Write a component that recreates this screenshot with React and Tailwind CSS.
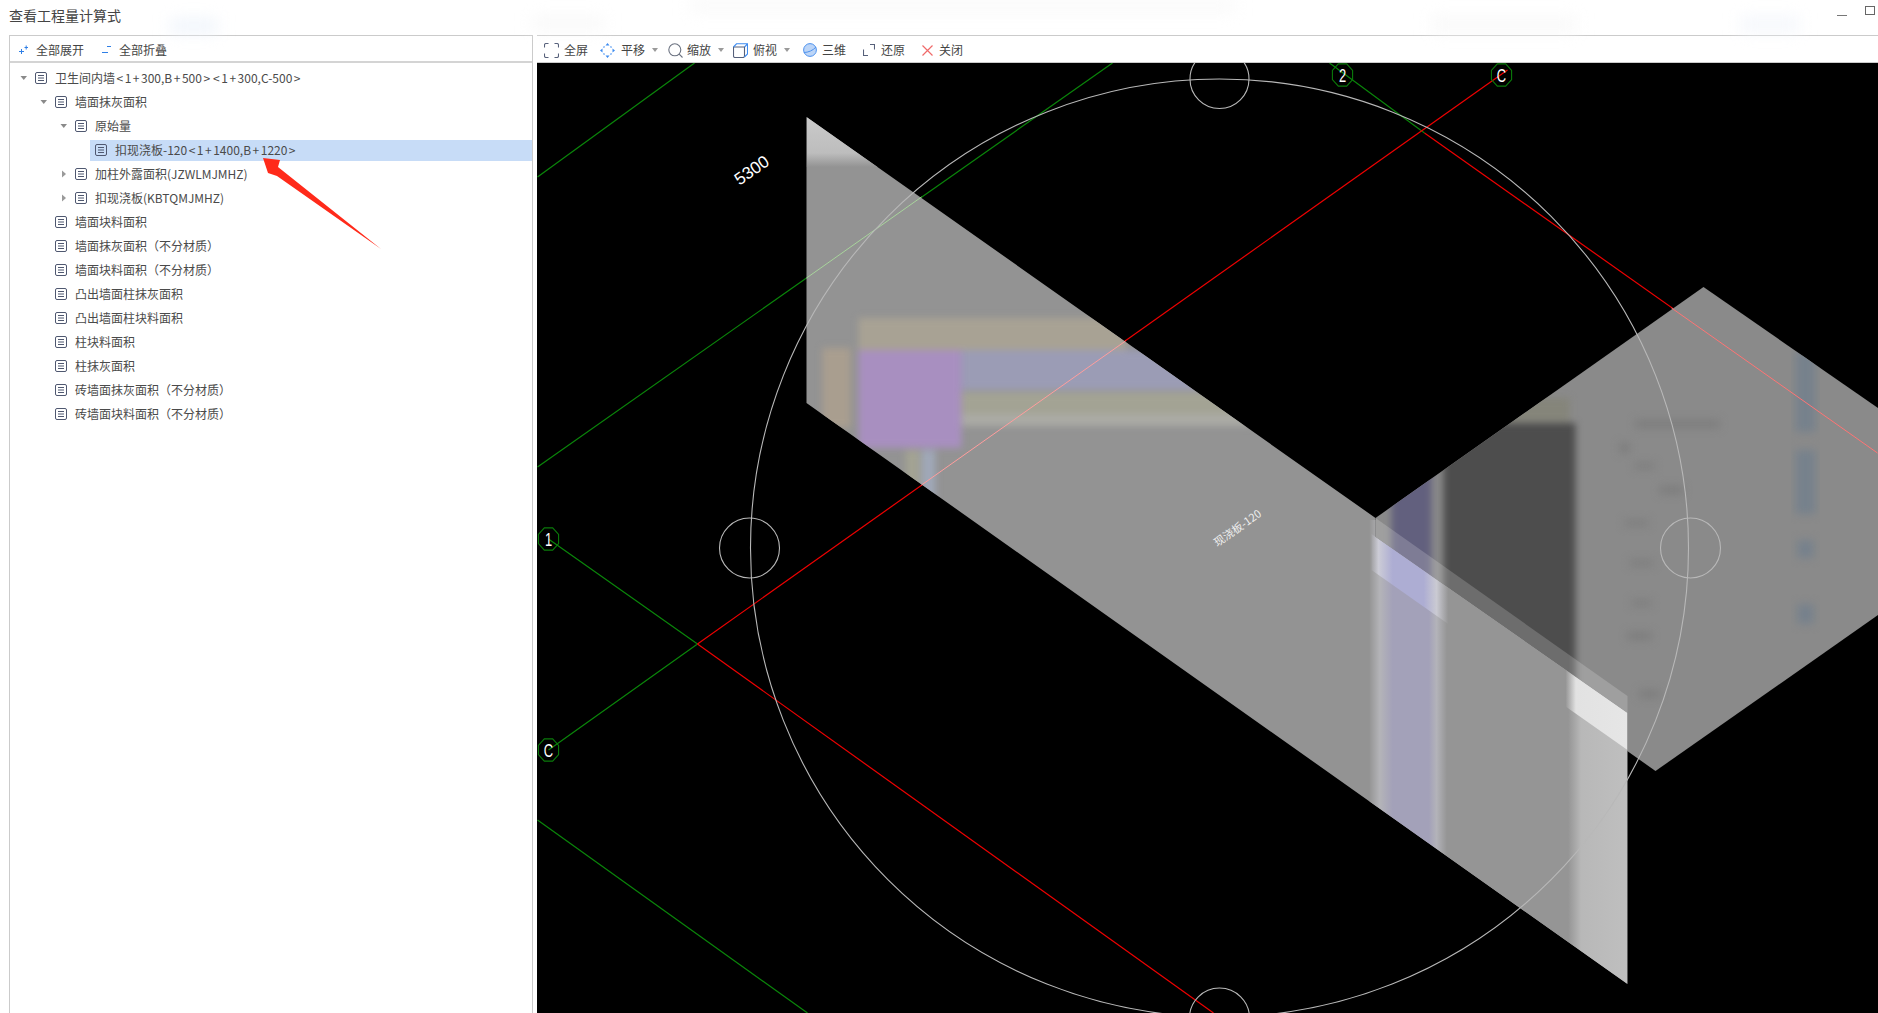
import React from "react";

const DocIcon = () => (
  <svg width="12" height="12" viewBox="0 0 12 12" className="shrink-0">
    <rect x="0.5" y="0.5" width="11" height="11" rx="1.5" fill="none" stroke="#4f5870" />
    <path d="M3 3.5H9M3 6H9M3 8.5H9" stroke="#4f5870" strokeWidth="1" />
  </svg>
);

const Caret = ({ open }) => (
  <svg width="8" height="8" viewBox="0 0 8 8" className="shrink-0">
    {open ? <path d="M0.5 2L7 2L3.75 6Z" fill="#8a8a8a" /> : <path d="M2 0.5L6 4L2 7.5Z" fill="#9a9a9a" />}
  </svg>
);

const rows = [
  { level: 0, caret: "open", text: "卫生间内墙<1+300,B+500><1+300,C-500>" },
  { level: 1, caret: "open", text: "墙面抹灰面积" },
  { level: 2, caret: "open", text: "原始量" },
  { level: 3, text: "扣现浇板-120<1+1400,B+1220>", selected: true },
  { level: 2, caret: "closed", text: "加柱外露面积(JZWLMJMHZ)" },
  { level: 2, caret: "closed", text: "扣现浇板(KBTQMJMHZ)" },
  { level: 1, text: "墙面块料面积" },
  { level: 1, text: "墙面抹灰面积（不分材质）" },
  { level: 1, text: "墙面块料面积（不分材质）" },
  { level: 1, text: "凸出墙面柱抹灰面积" },
  { level: 1, text: "凸出墙面柱块料面积" },
  { level: 1, text: "柱块料面积" },
  { level: 1, text: "柱抹灰面积" },
  { level: 1, text: "砖墙面抹灰面积（不分材质）" },
  { level: 1, text: "砖墙面块料面积（不分材质）" },
];

const indent = ["ml-[20px]", "ml-[40px]", "ml-[60px]", "ml-[80px]"];

function Label({ text }) {
  const parts = text.split(/([<>+])/);
  return (
    <span className="whitespace-nowrap text-xs text-[#4a4a4a]">
      {parts.map((p, i) =>
        /^[<>+]$/.test(p) ? <span key={i} className="mx-[1.5px]">{p}</span> : <span key={i}>{p}</span>
      )}
    </span>
  );
}

function Row({ level, caret, text, selected }) {
  return (
    <div className="h-6 flex items-center">
      <div className={`${indent[level]} h-[21px] flex items-center flex-1 ${selected ? "bg-[#c7dcf7]" : ""}`}>
        <div className="w-[10px] shrink-0 -ml-[10px] flex items-center">
          {caret ? <Caret open={caret === "open"} /> : null}
        </div>
        <div className="ml-[5px] mr-2">
          <DocIcon />
        </div>
        <Label text={text} />
      </div>
    </div>
  );
}

const Caret2 = () => (
  <svg width="6" height="4" viewBox="0 0 6 4" className="shrink-0 ml-[7px]">
    <path d="M0 0H6L3 4Z" fill="#9a9a9a" />
  </svg>
);

const ic = { fill: "none", strokeWidth: 1.1 };

function FullIcon() {
  return (
    <svg width="15" height="15" viewBox="0 0 15 15" {...ic} stroke="#56607a">
      <path d="M.5 4.5V2A1.5 1.5 0 0 1 2 .5H4.5M10.5 .5H13A1.5 1.5 0 0 1 14.5 2V4.5M14.5 10.5V13A1.5 1.5 0 0 1 13 14.5H10.5M4.5 14.5H2A1.5 1.5 0 0 1 .5 13V10.5" />
    </svg>
  );
}
function PanIcon() {
  return (
    <svg width="15" height="15" viewBox="0 0 15 15" {...ic} stroke="#3d8bf0">
      <path d="M7.5 0L9.5 2.5H5.5ZM7.5 15L5.5 12.5H9.5ZM0 7.5L2.5 5.5V9.5ZM15 7.5L12.5 9.5V5.5Z" fill="#3d8bf0" stroke="none" />
      <path d="M3.5 4.5L4.5 3.5M10.5 3.5L11.5 4.5M3.5 10.5L4.5 11.5M10.5 11.5L11.5 10.5" />
    </svg>
  );
}
function ZoomIcon() {
  return (
    <svg width="15" height="15" viewBox="0 0 15 15" {...ic} stroke="#6b7280">
      <circle cx="6.8" cy="6.8" r="6" />
      <path d="M11.2 11.2L14.5 14.5" />
    </svg>
  );
}
function BoxIcon() {
  return (
    <svg width="15" height="15" viewBox="0 0 15 15" {...ic} stroke="#56607a">
      <path d="M.5 4V13A1.5 1.5 0 0 0 2 14.5H10A1.5 1.5 0 0 0 11.5 13V4Z" />
      <path d="M.5 4L3.5 .8H14.5V11L11.5 14M11.5 4L14.5 .8" stroke="#3d8bf0" />
    </svg>
  );
}
function SphereIcon() {
  return (
    <svg width="14" height="14" viewBox="0 0 14 14">
      <circle cx="7" cy="7" r="6.4" fill="#bcd5f7" stroke="#4e92ee" strokeWidth="1" />
      <path d="M1 9.5C5 9.5 10 7.5 13 4" fill="none" stroke="#4e92ee" strokeWidth="1" />
    </svg>
  );
}
function RestoreIcon() {
  return (
    <svg width="12" height="12" viewBox="0 0 12 12" {...ic} stroke="#56607a">
      <path d="M.5 5.5V11.5H5M7 .5H11.5V5.5" />
    </svg>
  );
}
function CloseIcon() {
  return (
    <svg width="11" height="11" viewBox="0 0 11 11" {...ic} stroke="#f06a6a" strokeWidth="1.2">
      <path d="M.5 .5L10.5 10.5M10.5 .5L.5 10.5" />
    </svg>
  );
}

function Tool({ ml, gap, icon, text, caret }) {
  return (
    <div className={`flex items-center ${ml}`}>
      {icon}
      <span className={`${gap} text-xs text-[#444] whitespace-nowrap`}>{text}</span>
      {caret ? <Caret2 /> : null}
    </div>
  );
}

const wallPts = "807,117 1376,518 1376,537 1628,713 1628,984 807,403";
const slabPts = "1376,518 1704,287 1900,423 1900,600 1656,771 1376,573";

function Bubble({ x, y, t }) {
  const r = 11.5;
  const pts = [];
  for (let i = 0; i < 8; i++) {
    const a = (Math.PI / 8) * (2 * i + 1);
    pts.push(`${x + r * 0.95 * Math.cos(a)},${y + r * 1.05 * Math.sin(a)}`);
  }
  return (
    <g>
      <polygon points={pts.join(" ")} fill="none" stroke="#0a7a0a" strokeWidth="1.1" />
      <text
        textAnchor="middle"
        fontSize="18"
        fill="#fff"
        fontFamily="Liberation Sans, sans-serif"
        transform={`translate(${x} ${y + 6.5}) scale(0.72 1)`}
      >
        {t}
      </text>
    </g>
  );
}

function Scene() {
  return (
    <svg viewBox="538 63 1340 950" className="block w-full h-full bg-black">
      <defs>
        <clipPath id="wall"><polygon points={wallPts} /></clipPath>
        <clipPath id="slab"><polygon points={slabPts} /></clipPath>
        <filter id="b3" x="-20%" y="-20%" width="140%" height="140%" colorInterpolationFilters="sRGB"><feGaussianBlur stdDeviation="3.5" /></filter>
        <filter id="b1" x="-20%" y="-20%" width="140%" height="140%" colorInterpolationFilters="sRGB"><feGaussianBlur stdDeviation="4" /></filter>
        <linearGradient id="topg" x1="0" y1="0" x2="0" y2="1">
          <stop offset="0" stopColor="#cacaca" />
          <stop offset="0.72" stopColor="#bdbdbd" />
          <stop offset="1" stopColor="#939393" />
        </linearGradient>
        <linearGradient id="lower" gradientUnits="userSpaceOnUse" x1="1370" y1="0" x2="1628" y2="0">
          <stop offset="0" stopColor="#959595" />
          <stop offset="0.04" stopColor="#b4b4b8" />
          <stop offset="0.09" stopColor="#a3a1b9" />
          <stop offset="0.23" stopColor="#a3a1b9" />
          <stop offset="0.26" stopColor="#b3b3b9" />
          <stop offset="0.3" stopColor="#959595" />
          <stop offset="0.77" stopColor="#959595" />
          <stop offset="0.82" stopColor="#b8b8b8" />
          <stop offset="1" stopColor="#bfbfbf" />
        </linearGradient>
        <linearGradient id="strip" gradientUnits="userSpaceOnUse" x1="1370" y1="0" x2="1628" y2="0">
          <stop offset="0" stopColor="#959595" />
          <stop offset="0.035" stopColor="#ccccd6" />
          <stop offset="0.09" stopColor="#adadd3" />
          <stop offset="0.21" stopColor="#adadd3" />
          <stop offset="0.26" stopColor="#cacad2" />
          <stop offset="0.305" stopColor="#959595" />
          <stop offset="0.76" stopColor="#959595" />
          <stop offset="0.8" stopColor="#e2e2e2" />
          <stop offset="1" stopColor="#e6e6e6" />
        </linearGradient>
      </defs>

      {/* grid lines */}
      <g fill="none" strokeWidth="1.2">
        <path d="M538 177L695 63" stroke="#0a860a" />
        <path d="M538 467L1113 63" stroke="#0a860a" />
        <path d="M538 820L808 1013" stroke="#0a860a" />
        <path d="M549 539L698 644M549 750L698 644" stroke="#0a860a" />
        <path d="M1330 63L1425 133" stroke="#0a860a" />
        <path d="M698 644L1508 70" stroke="#ee0000" />
        <path d="M698 644L1214 1013" stroke="#ee0000" />
        <path d="M1425 133L1878 453" stroke="#ee0000" />
      </g>

      {/* slab */}
      <polygon points={slabPts} fill="#8a8a8a" />
      <g clipPath="url(#slab)">
        <g filter="url(#b3)">
          <rect x="1500" y="398" width="70" height="24" fill="#85857a" />
          <rect x="1392" y="380" width="40" height="260" fill="#62607e" />
          <rect x="1444" y="423" width="132" height="300" fill="#4d4d4d" />
        </g>
        <g filter="url(#b1)" fill="#76818c">
          <rect x="1796" y="352" width="20" height="80" />
          <rect x="1796" y="450" width="20" height="64" />
          <rect x="1798" y="540" width="16" height="18" />
          <rect x="1798" y="604" width="16" height="20" />
        </g>
        <g filter="url(#b1)" fill="#7d7d7d">
          <rect x="1636" y="420" width="84" height="8" />
          <rect x="1620" y="443" width="10" height="10" />
          <rect x="1635" y="463" width="20" height="6" />
          <rect x="1660" y="486" width="24" height="8" />
          <rect x="1625" y="520" width="24" height="6" />
          <rect x="1630" y="560" width="24" height="6" />
          <rect x="1632" y="600" width="20" height="6" />
          <rect x="1628" y="632" width="24" height="8" />
          <rect x="1640" y="690" width="20" height="8" />
        </g>
      </g>
      <polygon points="1376,518 1376,537 1628,713 1628,696" fill="#fff" fillOpacity="0.18" />

      {/* wall */}
      <polygon points={wallPts} fill="#939393" />
      <g clipPath="url(#wall)">
        <rect x="807" y="117" width="200" height="50" fill="url(#topg)" />
        <g filter="url(#b3)">
          <rect x="859" y="318" width="268" height="32" fill="#a8a294" />
          <rect x="962" y="350" width="240" height="40" fill="#9b9cb5" />
          <rect x="962" y="392" width="290" height="22" fill="#a3a394" />
          <rect x="962" y="414" width="290" height="12" fill="#ababa5" />
          <rect x="823" y="348" width="28" height="80" fill="#a99e8f" />
          <rect x="859" y="350" width="103" height="98" fill="#a88fc0" />
          <rect x="906" y="450" width="14" height="50" fill="#a3a393" />
          <rect x="922" y="450" width="14" height="50" fill="#a0a8b8" />
        </g>
        <rect x="1370" y="520" width="258" height="470" fill="url(#lower)" />
        <polygon points="1372,534 1628,713 1628,750 1372,570" fill="url(#strip)" />
      </g>

      {/* lines seen through the wall and slab */}
      <path d="M807 278L922 197" stroke="#a8d49c" strokeWidth="1" />
      <path d="M922 485L1126 341" stroke="#ff9d9d" strokeWidth="1" />
      <path d="M1672 308L1878 453" stroke="#ff7474" strokeWidth="1" />

      {/* circles */}
      <g fill="none" stroke="#b8b8b8" strokeWidth="1.1">
        <circle cx="1220" cy="548" r="469" />
        <circle cx="1220" cy="79" r="29.5" />
        <circle cx="750" cy="548" r="30" />
        <circle cx="1691" cy="548" r="30" />
        <circle cx="1220" cy="1018" r="30" />
      </g>

      <Bubble x={1343} y={75} t="2" />
      <Bubble x={1502} y={75} t="C" />
      <Bubble x={549} y={539} t="1" />
      <Bubble x={549} y={750} t="C" />

      <text x="752" y="176" fontSize="17" fill="#fff" textAnchor="middle" transform="rotate(-35 752 170)" fontFamily="Liberation Sans, sans-serif">5300</text>
      <text x="1238" y="532" fontSize="11" fill="#f0f0f0" textAnchor="middle" transform="rotate(-35 1238 528)" fontFamily="Noto Sans CJK SC, sans-serif">现浇板-120</text>
    </svg>
  );
}

export default function App() {
  return (
    <div className="relative w-[1878px] h-[1013px] overflow-hidden bg-white flex flex-col [font-family:'Noto_Sans_CJK_SC','Liberation_Sans',sans-serif]">
      <div className="h-[35px] shrink-0 flex items-center justify-between pl-[9px] pr-[3px]">
        <span className="text-sm text-[#444] -mt-[5px]">查看工程量计算式</span>
        <div className="flex items-center gap-[18px] -mt-[14px]">
          <div className="w-[10px] h-px bg-[#777] mt-[9px]" />
          <div className="w-[10px] h-[9px] border border-[#666]" />
        </div>
      </div>
      <div className="flex-1 min-h-0 flex pl-[9px]">
        <div className="w-[524px] shrink-0 border-l border-r border-t border-[#cbcbcb] flex flex-col">
          <div className="h-[27px] shrink-0 border-b-2 border-[#d4d4d4] flex items-center pt-[2px]">
            <svg width="9" height="9" viewBox="0 0 9 9" className="ml-[9px]" stroke="#2f7fe6" fill="none">
              <path d="M0 6.5H5M2.5 4V9M5.5 2.5H9M7.2 0.5V4.5" />
            </svg>
            <span className="ml-[8px] text-xs text-[#444]">全部展开</span>
            <svg width="9" height="9" viewBox="0 0 9 9" className="ml-[18px]" stroke="#2f7fe6" fill="none">
              <path d="M0 7.5H6M5 1.5H9" />
            </svg>
            <span className="ml-[8px] text-xs text-[#444]">全部折叠</span>
          </div>
          <div className="pt-[3px]">
            {rows.map((r, i) => <Row key={i} {...r} />)}
          </div>
        </div>
        <div className="ml-[4px] flex-1 min-w-0 flex flex-col">
          <div className="h-[28px] shrink-0 border-t border-b border-[#cbcbcb] flex items-center pl-[7px] pt-[2px]">
            <Tool icon={<FullIcon />} gap="ml-[5px]" text="全屏" />
            <Tool ml="ml-[12px]" icon={<PanIcon />} gap="ml-[6px]" text="平移" caret />
            <Tool ml="ml-[10px]" icon={<ZoomIcon />} gap="ml-[4px]" text="缩放" caret />
            <Tool ml="ml-[9px]" icon={<BoxIcon />} gap="ml-[5px]" text="俯视" caret />
            <Tool ml="ml-[13px]" icon={<SphereIcon />} gap="ml-[5px]" text="三维" />
            <Tool ml="ml-[17px]" icon={<RestoreIcon />} gap="ml-[6px]" text="还原" />
            <Tool ml="ml-[17px]" icon={<CloseIcon />} gap="ml-[6px]" text="关闭" />
          </div>
          <div className="flex-1 min-h-0">
            <Scene />
          </div>
        </div>
      </div>
      <svg viewBox="0 0 130 100" className="absolute left-[258px] top-[155px] w-[130px] h-[100px]">
        <polygon points="5,3 22,5 20,12 123,94 19,21 10,18" fill="#ff2a1a" />
      </svg>
      <div className="absolute left-[170px] top-[20px] w-[48px] h-[12px] bg-[#edf3fb] blur-sm" />
      <div className="absolute left-[532px] top-[18px] w-[72px] h-[11px] bg-[#f7f7f7] blur-sm" />
      <div className="absolute left-[690px] top-0 w-[545px] h-[11px] bg-[#f8f8f8] blur-sm" />
      <div className="absolute left-[1431px] top-[18px] w-[146px] h-[13px] bg-[#f8f8f8] blur-sm" />
      <div className="absolute left-[1740px] top-[18px] w-[60px] h-[13px] bg-[#f3f6fb] blur-sm" />
    </div>
  );
}
